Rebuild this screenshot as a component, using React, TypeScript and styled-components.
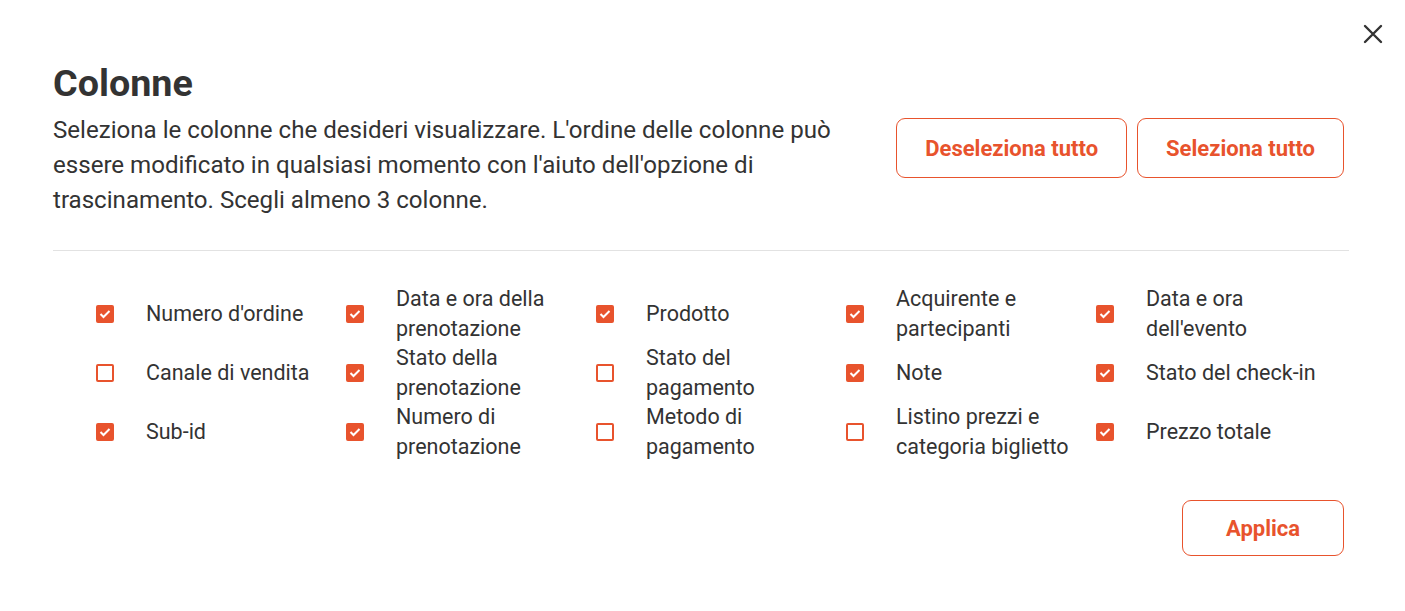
import styled, { createGlobalStyle } from "styled-components";

const accent = "#e8532d";
const ink = "#333333";

const GlobalStyle = createGlobalStyle`
  body {
    margin: 0;
    background: #ffffff;
    font-family: Roboto, "Noto Sans", Arial, sans-serif;
    color: ${ink};
  }
`;

const Modal = styled.div`
  position: relative;
  box-sizing: border-box;
  width: 1405px;
  min-height: 611px;
  padding: 61px 56px 0 53px;
  background: #fff;
`;

const CloseButton = styled.button`
  position: absolute;
  top: 22px;
  right: 20px;
  width: 24px;
  height: 24px;
  padding: 0;
  border: 0;
  background: none;
  cursor: pointer;
  display: flex;
  align-items: center;
  justify-content: center;
`;

const Title = styled.h1`
  margin: 0;
  font-size: 37.7px;
  line-height: 44px;
  font-weight: 700;
  color: ${ink};
`;

const Header = styled.div`
  display: flex;
  justify-content: space-between;
  align-items: flex-start;
  margin-top: 8px;
`;

const Description = styled.p`
  margin: 0;
  max-width: 800px;
  font-size: 24.1px;
  line-height: 35px;
  color: ${ink};
`;

const ButtonGroup = styled.div`
  display: flex;
  gap: 10px;
  margin-top: 5px;
  margin-right: 5px;
`;

const OutlineButton = styled.button<{ $height?: number }>`
  height: ${(p) => p.$height ?? 60}px;
  padding: 0 28px;
  border: 1px solid ${accent};
  border-radius: 9px;
  background: #fff;
  color: ${accent};
  font-family: inherit;
  font-size: 22px;
  font-weight: 700;
  cursor: pointer;
`;

const Divider = styled.hr`
  margin: 32px 0 33px;
  border: 0;
  border-top: 1px solid #e2e2e2;
`;

const Grid = styled.div`
  display: grid;
  grid-template-columns: repeat(5, 250px);
  grid-auto-rows: 59px;
  padding-left: 43px;
`;

const Item = styled.label`
  display: flex;
  align-items: center;
  gap: 32px;
  cursor: pointer;
`;

const Box = styled.span<{ $checked: boolean }>`
  flex: none;
  box-sizing: border-box;
  width: 18px;
  height: 18px;
  border-radius: 2px;
  border: 2px solid ${accent};
  background: ${(p) => (p.$checked ? accent : "#fff")};
  display: flex;
  align-items: center;
  justify-content: center;
`;

const Label = styled.span`
  max-width: 180px;
  font-size: 21.5px;
  line-height: 29.5px;
  color: ${ink};
`;

const Footer = styled.div`
  display: flex;
  justify-content: flex-end;
  margin-top: 39px;
  margin-right: 5px;
`;

const ApplyButton = styled(OutlineButton)`
  width: 162px;
`;

const columns: [string, boolean][] = [
  ["Numero d'ordine", true],
  ["Data e ora della prenotazione", true],
  ["Prodotto", true],
  ["Acquirente e partecipanti", true],
  ["Data e ora dell'evento", true],
  ["Canale di vendita", false],
  ["Stato della prenotazione", true],
  ["Stato del pagamento", false],
  ["Note", true],
  ["Stato del check-in", true],
  ["Sub-id", true],
  ["Numero di prenotazione", true],
  ["Metodo di pagamento", false],
  ["Listino prezzi e categoria biglietto", false],
  ["Prezzo totale", true],
];

export default function App() {
  return (
    <>
      <GlobalStyle />
      <Modal>
        <CloseButton aria-label="Chiudi">
          <svg width="20" height="20" viewBox="0 0 20 20">
            <path d="M2 2L18 18M18 2L2 18" stroke={ink} strokeWidth="2.4" strokeLinecap="round" />
          </svg>
        </CloseButton>
        <Title>Colonne</Title>
        <Header>
          <Description>
            Seleziona le colonne che desideri visualizzare. L'ordine delle colonne può essere
            modificato in qualsiasi momento con l'aiuto dell'opzione di trascinamento. Scegli almeno
            3 colonne.
          </Description>
          <ButtonGroup>
            <OutlineButton>Deseleziona tutto</OutlineButton>
            <OutlineButton>Seleziona tutto</OutlineButton>
          </ButtonGroup>
        </Header>
        <Divider />
        <Grid>
          {columns.map(([name, checked]) => (
            <Item key={name}>
              <Box $checked={checked}>
                {checked && (
                  <svg width="12" height="10" viewBox="0 0 12 10">
                    <path d="M1.5 5L4.5 8L10.5 2" stroke="#fff" strokeWidth="2" fill="none" />
                  </svg>
                )}
              </Box>
              <Label>{name}</Label>
            </Item>
          ))}
        </Grid>
        <Footer>
          <ApplyButton $height={56}>Applica</ApplyButton>
        </Footer>
      </Modal>
    </>
  );
}
